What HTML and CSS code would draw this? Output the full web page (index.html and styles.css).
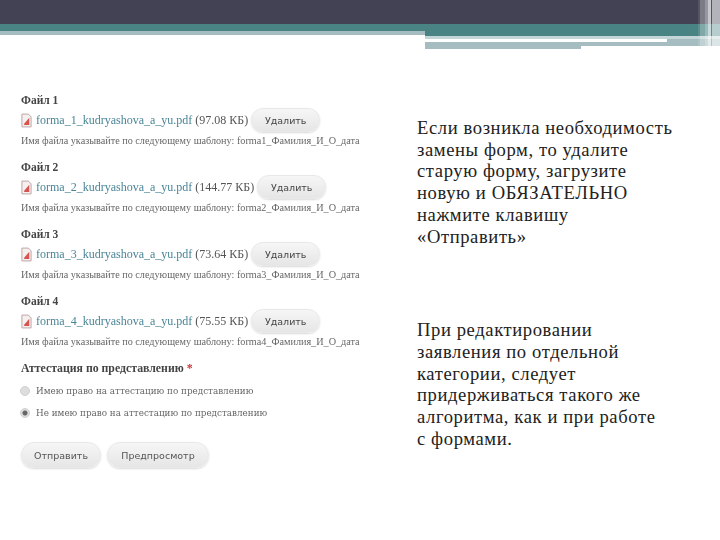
FILE: index.html
```html
<!DOCTYPE html>
<html lang="ru">
<head>
  <meta charset="UTF-8" />
  <title>Замена форм</title>
  <link rel="stylesheet" href="styles.css">
</head>
<body>
  <div class="slide">
    <header class="top">
      <div class="dark"></div>
      <div class="bands">
        <div class="bands-left">
          <div class="teal-thin"></div>
          <div class="grey-thin"></div>
        </div>
        <div class="bands-right">
          <div class="teal-wide"></div>
          <div class="pale"></div>
          <div class="line-row"><div class="white-line"></div></div>
          <div class="grey-full"></div>
          <div class="grey-short"></div>
        </div>
      </div>
      <div class="stripes"></div>
    </header>

    <main class="content">
      <section class="shot">
        <div class="file">
          <div class="file-title">Файл 1</div>
          <div class="file-row">
            <svg class="pdf" viewBox="0 0 12 16"><path class="pdf-page" d="M1 1h7l3 3v11H1z"/><path class="pdf-mark" d="M3 12 9 5v8H4z"/></svg>
            <a class="file-link" href="#">forma_1_kudryashova_a_yu.pdf</a>
            <span class="file-size">(97.08 КБ)</span>
            <button class="btn btn-del">Удалить</button>
          </div>
          <div class="hint">Имя файла указывайте по следующему шаблону: forma1_Фамилия_И_О_дата</div>
        </div>
        <div class="file">
          <div class="file-title">Файл 2</div>
          <div class="file-row">
            <svg class="pdf" viewBox="0 0 12 16"><path class="pdf-page" d="M1 1h7l3 3v11H1z"/><path class="pdf-mark" d="M3 12 9 5v8H4z"/></svg>
            <a class="file-link" href="#">forma_2_kudryashova_a_yu.pdf</a>
            <span class="file-size">(144.77 КБ)</span>
            <button class="btn btn-del">Удалить</button>
          </div>
          <div class="hint">Имя файла указывайте по следующему шаблону: forma2_Фамилия_И_О_дата</div>
        </div>
        <div class="file">
          <div class="file-title">Файл 3</div>
          <div class="file-row">
            <svg class="pdf" viewBox="0 0 12 16"><path class="pdf-page" d="M1 1h7l3 3v11H1z"/><path class="pdf-mark" d="M3 12 9 5v8H4z"/></svg>
            <a class="file-link" href="#">forma_3_kudryashova_a_yu.pdf</a>
            <span class="file-size">(73.64 КБ)</span>
            <button class="btn btn-del">Удалить</button>
          </div>
          <div class="hint">Имя файла указывайте по следующему шаблону: forma3_Фамилия_И_О_дата</div>
        </div>
        <div class="file">
          <div class="file-title">Файл 4</div>
          <div class="file-row">
            <svg class="pdf" viewBox="0 0 12 16"><path class="pdf-page" d="M1 1h7l3 3v11H1z"/><path class="pdf-mark" d="M3 12 9 5v8H4z"/></svg>
            <a class="file-link" href="#">forma_4_kudryashova_a_yu.pdf</a>
            <span class="file-size">(75.55 КБ)</span>
            <button class="btn btn-del">Удалить</button>
          </div>
          <div class="hint">Имя файла указывайте по следующему шаблону: forma4_Фамилия_И_О_дата</div>
        </div>

        <div class="attest-title">Аттестация по представлению <span class="req">*</span></div>
        <div class="radio-group">
          <div class="radio-row"><span class="radio"></span>Имею право на аттестацию по представлению</div>
          <div class="radio-row"><span class="radio radio-on"></span>Не имею право на аттестацию по представлению</div>
        </div>

        <div class="actions">
          <button class="btn btn-main">Отправить</button>
          <button class="btn btn-main btn-preview">Предпросмотр</button>
        </div>
      </section>

      <section class="notes">
        <p>Если возникла необходимость<br>замены форм, то удалите<br>старую форму, загрузите<br>новую и ОБЯЗАТЕЛЬНО<br>нажмите клавишу<br>«Отправить»</p>
        <p>При редактировании<br>заявления по отдельной<br>категории, следует<br>придерживаться такого же<br>алгоритма, как и при работе<br>с формами.</p>
      </section>
    </main>
  </div>
</body>
</html>
```

FILE: styles.css
```css
body {
  margin: 0;
  background: #ffffff;
}

.slide {
  width: 720px;
  height: 540px;
  overflow: hidden;
}

/* top bands */
.top {
  position: relative;
  height: 49px;
}

.dark {
  height: 24px;
  background: #424254;
}

.bands {
  display: flex;
}

.bands-left {
  width: 425px;
}

.bands-right {
  flex: 1;
}

.teal-thin {
  height: 7px;
  background: #4a8384;
}

.grey-thin {
  height: 4px;
  background: #a5bdc1;
}

.teal-wide {
  height: 12px;
  background: #4a8384;
}

.pale {
  height: 3px;
  background: #c3d5d7;
}

.line-row {
  height: 3px;
  background: #a5bdc1;
}

.white-line {
  height: 3px;
  width: 242px;
  background: #ffffff;
}

.grey-full {
  height: 4px;
  background: #a5bdc1;
}

.grey-short {
  height: 3px;
  width: 156px;
  background: #a5bdc1;
}

.stripes {
  position: absolute;
  top: 0;
  right: 0;
  width: 22px;
  height: 47px;
  background: linear-gradient(90deg, rgba(255,255,255,0.1) 0 2px, rgba(255,255,255,0.3) 2px 7px, rgba(255,255,255,0.45) 7px 10px, rgba(255,255,255,0.7) 10px 13px, rgba(255,255,255,0.1) 13px 14px, rgba(255,255,255,0.6) 14px 22px);
}

/* main area */
.content {
  display: flex;
}

.shot {
  width: 396px;
  padding: 44px 0 0 21px;
  font-family: "Liberation Serif", "DejaVu Serif", serif;
  color: #555555;
  filter: blur(0.4px);
}

.file {
  margin-bottom: 12px;
}

.file-title {
  font-size: 11.5px;
  font-weight: bold;
  line-height: 14px;
  color: #444444;
}

.file-row {
  display: flex;
  align-items: center;
  font-size: 12px;
  height: 26px;
}

.pdf {
  width: 11px;
  height: 15px;
  margin-right: 4px;
  flex: none;
}

.pdf-page {
  fill: #f4f0f0;
  stroke: #b9a0a0;
  stroke-width: 1;
}

.pdf-mark {
  fill: #d8534f;
}

.file-link {
  color: #4a8596;
  text-decoration: none;
}

.file-size {
  margin-left: 3px;
  margin-right: 3px;
}

.hint {
  font-size: 10.2px;
  line-height: 14px;
  margin-top: 1px;
  color: #666666;
}

.btn {
  border: 1px solid #e8e8e8;
  border-radius: 12px;
  background: linear-gradient(#f6f6f6, #e6e6e6);
  box-shadow: 0 1px 2px rgba(0, 0, 0, 0.15);
  font-family: "DejaVu Sans", "Liberation Sans", sans-serif;
  font-size: 9.5px;
  color: #444444;
  padding: 0;
}

.btn-del {
  width: 69px;
  height: 24px;
}

.attest-title {
  font-size: 11.8px;
  font-weight: bold;
  color: #444444;
  line-height: 14px;
  margin-top: 2px;
}

.req {
  color: #cc3333;
}

.radio-group {
  margin-top: 5px;
}

.radio-row {
  display: flex;
  align-items: center;
  gap: 6px;
  font-family: "DejaVu Serif", serif;
  font-size: 8.8px;
  height: 22px;
  color: #666666;
}

.radio {
  width: 8px;
  height: 8px;
  margin-left: -1px;
  border-radius: 50%;
  background: #dddddd;
  border: 1px solid #d0d0d0;
}

.radio-on {
  background: radial-gradient(circle, #666666 0 2px, #dddddd 3px);
}

.actions {
  display: flex;
  gap: 6px;
  margin-top: 18px;
}

.btn-main {
  width: 80px;
  height: 26px;
  border-radius: 13px;
  color: #555555;
}

.btn-preview {
  width: 102px;
}

/* right column text */
.notes {
  width: 262px;
  padding-top: 68px;
  font-family: "Liberation Serif", serif;
  font-size: 18.6px;
  letter-spacing: 0.6px;
  line-height: 21.7px;
  color: #222222;
}

.notes p {
  margin: 0 0 72px;
}
```
